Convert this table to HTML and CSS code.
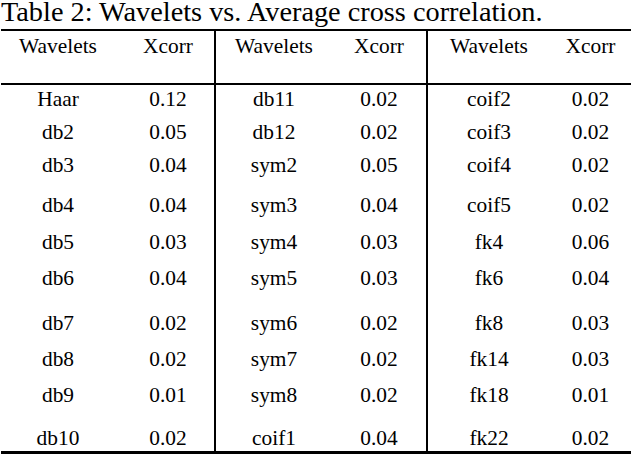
FILE: index.html
```html
<!DOCTYPE html>
<html>
<head>
<meta charset="utf-8">
<link rel="stylesheet" href="styles.css">
</head>
<body>
<div class="page">
  <div class="caption">Table 2: Wavelets vs. Average cross correlation.</div>
  <div class="table">
    <div class="row head">
      <div class="c c1">Wavelets</div><div class="c c2">Xcorr</div>
      <div class="c c3">Wavelets</div><div class="c c4">Xcorr</div>
      <div class="c c5">Wavelets</div><div class="c c6">Xcorr</div>
    </div>
    <div class="row">
      <div class="c c1">Haar</div><div class="c c2">0.12</div>
      <div class="c c3">db11</div><div class="c c4">0.02</div>
      <div class="c c5">coif2</div><div class="c c6">0.02</div>
    </div>
    <div class="row">
      <div class="c c1">db2</div><div class="c c2">0.05</div>
      <div class="c c3">db12</div><div class="c c4">0.02</div>
      <div class="c c5">coif3</div><div class="c c6">0.02</div>
    </div>
    <div class="row">
      <div class="c c1">db3</div><div class="c c2">0.04</div>
      <div class="c c3">sym2</div><div class="c c4">0.05</div>
      <div class="c c5">coif4</div><div class="c c6">0.02</div>
    </div>
    <div class="row">
      <div class="c c1">db4</div><div class="c c2">0.04</div>
      <div class="c c3">sym3</div><div class="c c4">0.04</div>
      <div class="c c5">coif5</div><div class="c c6">0.02</div>
    </div>
    <div class="row">
      <div class="c c1">db5</div><div class="c c2">0.03</div>
      <div class="c c3">sym4</div><div class="c c4">0.03</div>
      <div class="c c5">fk4</div><div class="c c6">0.06</div>
    </div>
    <div class="row">
      <div class="c c1">db6</div><div class="c c2">0.04</div>
      <div class="c c3">sym5</div><div class="c c4">0.03</div>
      <div class="c c5">fk6</div><div class="c c6">0.04</div>
    </div>
    <div class="row">
      <div class="c c1">db7</div><div class="c c2">0.02</div>
      <div class="c c3">sym6</div><div class="c c4">0.02</div>
      <div class="c c5">fk8</div><div class="c c6">0.03</div>
    </div>
    <div class="row">
      <div class="c c1">db8</div><div class="c c2">0.02</div>
      <div class="c c3">sym7</div><div class="c c4">0.02</div>
      <div class="c c5">fk14</div><div class="c c6">0.03</div>
    </div>
    <div class="row">
      <div class="c c1">db9</div><div class="c c2">0.01</div>
      <div class="c c3">sym8</div><div class="c c4">0.02</div>
      <div class="c c5">fk18</div><div class="c c6">0.01</div>
    </div>
    <div class="row">
      <div class="c c1">db10</div><div class="c c2">0.02</div>
      <div class="c c3">coif1</div><div class="c c4">0.04</div>
      <div class="c c5">fk22</div><div class="c c6">0.02</div>
    </div>
  </div>
</div>
</body>
</html>
```
FILE: styles.css
```css
html, body {
  margin: 0;
  padding: 0;
  background: #ffffff;
}
body {
  font-family: "Liberation Serif", "Times New Roman", serif;
  color: #000000;
}
.page {
  width: 632px;
  height: 454px;
  overflow: hidden;
}
.caption {
  font-size: 28.3px;
  line-height: 24px;
  height: 29px;
  padding-left: 1px;
  white-space: nowrap;
}
.table {
  margin-left: 1px;
  width: 630px;
  border-top: 2px solid #000;
  border-bottom: 3px solid #000;
  display: flex;
  flex-direction: column;
}
.row {
  display: grid;
  grid-template-columns: 114px 99px 118px 94px 124px 81px;
  font-size: 21.4px;
  line-height: 20px;
  height: 36px;
}
.row.head {
  height: 52px;
  border-bottom: 2px solid #000;
}
.row.head .c {
  padding-top: 5px;
}
.c {
  box-sizing: border-box;
  text-align: center;
  padding-top: 4px;
  white-space: nowrap;
}
.c2 {
  padding-left: 7px;
}
.c3, .c5 {
  border-left: 2px solid #000;
}
.row:nth-child(2) { height: 33px; }
.row:nth-child(3) { height: 33px; }
.row:nth-child(4) { height: 40px; }
.row:nth-child(5) { height: 37px; }
.row:nth-child(6) { height: 36px; }
.row:nth-child(7) { height: 45px; }
.row:nth-child(8) { height: 36px; }
.row:nth-child(9) { height: 36px; }
.row:nth-child(10) { height: 43px; }
.row:nth-child(11) { height: 27px; }
```
